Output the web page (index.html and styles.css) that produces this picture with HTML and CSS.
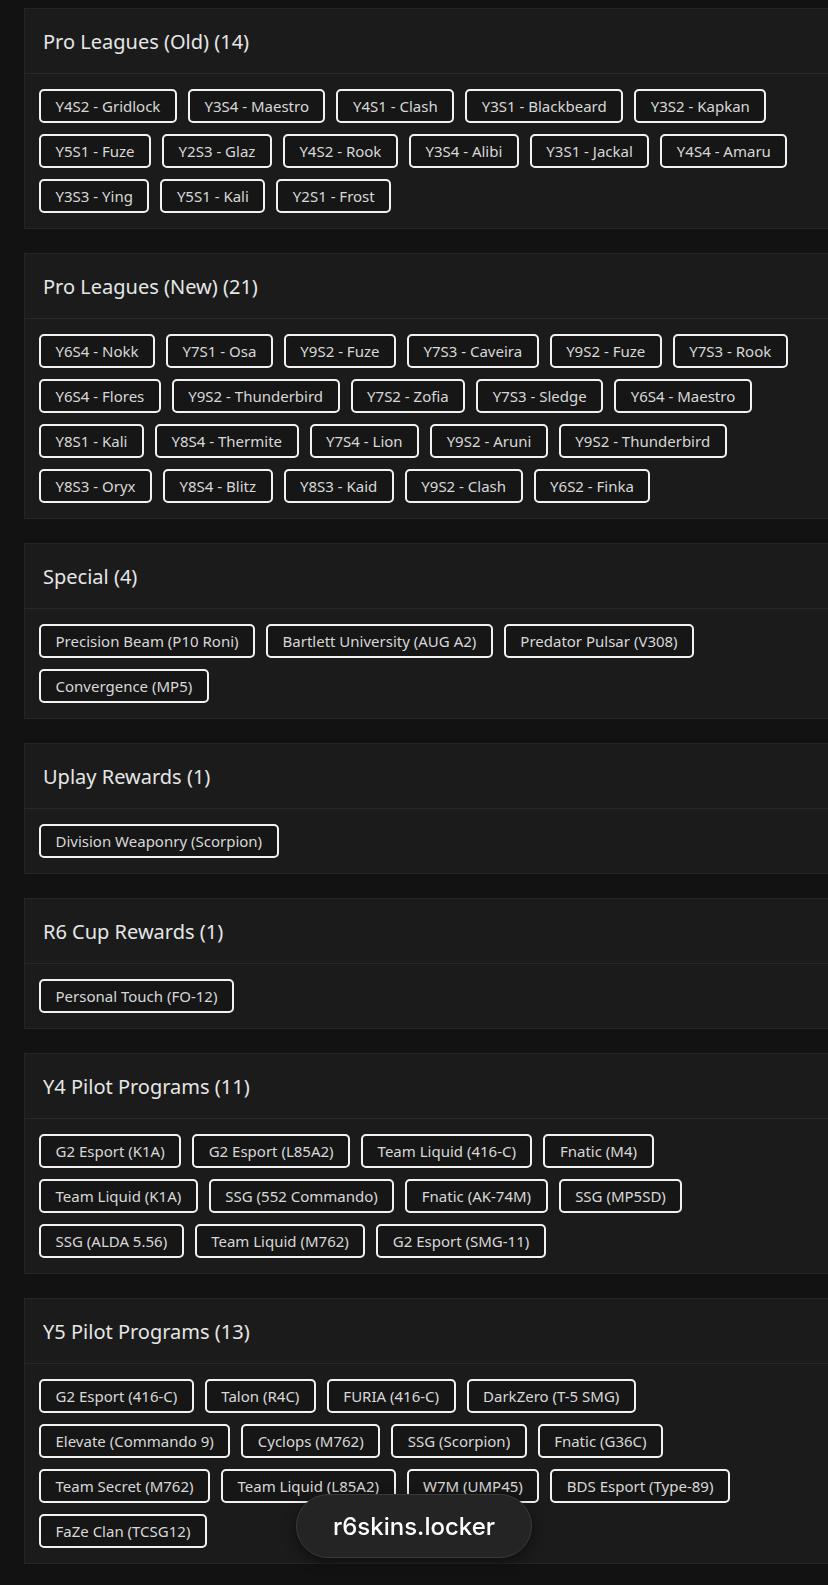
FILE: index.html
```html
<!DOCTYPE html>
<html lang="en">
<head>
<meta charset="utf-8">
<title>r6skins.locker</title>
<link rel="stylesheet" href="styles.css">
</head>
<body>
<main class="list">
  <section class="card">
    <h2 class="card-title">Pro Leagues (Old) (14)</h2>
    <div class="chips">
      <span class="chip">Y4S2 - Gridlock</span>
      <span class="chip">Y3S4 - Maestro</span>
      <span class="chip">Y4S1 - Clash</span>
      <span class="chip">Y3S1 - Blackbeard</span>
      <span class="chip">Y3S2 - Kapkan</span>
      <span class="chip">Y5S1 - Fuze</span>
      <span class="chip">Y2S3 - Glaz</span>
      <span class="chip">Y4S2 - Rook</span>
      <span class="chip">Y3S4 - Alibi</span>
      <span class="chip">Y3S1 - Jackal</span>
      <span class="chip">Y4S4 - Amaru</span>
      <span class="chip">Y3S3 - Ying</span>
      <span class="chip">Y5S1 - Kali</span>
      <span class="chip">Y2S1 - Frost</span>
    </div>
  </section>

  <section class="card">
    <h2 class="card-title">Pro Leagues (New) (21)</h2>
    <div class="chips">
      <span class="chip">Y6S4 - Nokk</span>
      <span class="chip">Y7S1 - Osa</span>
      <span class="chip">Y9S2 - Fuze</span>
      <span class="chip">Y7S3 - Caveira</span>
      <span class="chip">Y9S2 - Fuze</span>
      <span class="chip">Y7S3 - Rook</span>
      <span class="chip">Y6S4 - Flores</span>
      <span class="chip">Y9S2 - Thunderbird</span>
      <span class="chip">Y7S2 - Zofia</span>
      <span class="chip">Y7S3 - Sledge</span>
      <span class="chip">Y6S4 - Maestro</span>
      <span class="chip">Y8S1 - Kali</span>
      <span class="chip">Y8S4 - Thermite</span>
      <span class="chip">Y7S4 - Lion</span>
      <span class="chip">Y9S2 - Aruni</span>
      <span class="chip">Y9S2 - Thunderbird</span>
      <span class="chip">Y8S3 - Oryx</span>
      <span class="chip">Y8S4 - Blitz</span>
      <span class="chip">Y8S3 - Kaid</span>
      <span class="chip">Y9S2 - Clash</span>
      <span class="chip">Y6S2 - Finka</span>
    </div>
  </section>

  <section class="card">
    <h2 class="card-title">Special (4)</h2>
    <div class="chips">
      <span class="chip">Precision Beam (P10 Roni)</span>
      <span class="chip">Bartlett University (AUG A2)</span>
      <span class="chip">Predator Pulsar (V308)</span>
      <span class="chip">Convergence (MP5)</span>
    </div>
  </section>

  <section class="card">
    <h2 class="card-title">Uplay Rewards (1)</h2>
    <div class="chips">
      <span class="chip">Division Weaponry (Scorpion)</span>
    </div>
  </section>

  <section class="card">
    <h2 class="card-title">R6 Cup Rewards (1)</h2>
    <div class="chips">
      <span class="chip">Personal Touch (FO-12)</span>
    </div>
  </section>

  <section class="card">
    <h2 class="card-title">Y4 Pilot Programs (11)</h2>
    <div class="chips">
      <span class="chip">G2 Esport (K1A)</span>
      <span class="chip">G2 Esport (L85A2)</span>
      <span class="chip">Team Liquid (416-C)</span>
      <span class="chip">Fnatic (M4)</span>
      <span class="chip">Team Liquid (K1A)</span>
      <span class="chip">SSG (552 Commando)</span>
      <span class="chip">Fnatic (AK-74M)</span>
      <span class="chip">SSG (MP5SD)</span>
      <span class="chip">SSG (ALDA 5.56)</span>
      <span class="chip">Team Liquid (M762)</span>
      <span class="chip">G2 Esport (SMG-11)</span>
    </div>
  </section>

  <section class="card">
    <h2 class="card-title">Y5 Pilot Programs (13)</h2>
    <div class="chips">
      <span class="chip">G2 Esport (416-C)</span>
      <span class="chip">Talon (R4C)</span>
      <span class="chip">FURIA (416-C)</span>
      <span class="chip">DarkZero (T-5 SMG)</span>
      <span class="chip">Elevate (Commando 9)</span>
      <span class="chip">Cyclops (M762)</span>
      <span class="chip">SSG (Scorpion)</span>
      <span class="chip">Fnatic (G36C)</span>
      <span class="chip">Team Secret (M762)</span>
      <span class="chip">Team Liquid (L85A2)</span>
      <span class="chip">W7M (UMP45)</span>
      <span class="chip">BDS Esport (Type-89)</span>
      <span class="chip">FaZe Clan (TCSG12)</span>
    </div>
  </section>
</main>

<a class="site-pill" href="#">r6skins.locker</a>
</body>
</html>
```
FILE: styles.css
```css
html, body {
  margin: 0;
  padding: 0;
  background: #121212;
  overflow-x: hidden;
}

body {
  font-family: "Noto Sans", "Open Sans", sans-serif;
  color: #e4e4e4;
}

.list {
  display: flex;
  flex-direction: column;
  gap: 24px;
  padding: 8px 0 24px 24px;
}

.card {
  margin-right: -12px;
  background: #1b1b1b;
  border: 1px solid #252525;
}

.card-title {
  margin: 0;
  height: 64px;
  display: flex;
  align-items: center;
  padding: 0 18px;
  font-size: 20px;
  font-weight: 400;
  color: #e6e6e6;
  border-bottom: 1px solid #282828;
}

.chips {
  display: flex;
  flex-wrap: wrap;
  gap: 11px;
  padding: 15px 31px 15px 14px;
}

.chip {
  box-sizing: border-box;
  height: 34px;
  display: inline-flex;
  align-items: center;
  padding: 0 14.5px;
  border: 2px solid #f2f2f2;
  border-radius: 5px;
  background: #161616;
  color: #d8d8d8;
  font-size: 15px;
  white-space: nowrap;
}

.site-pill {
  position: fixed;
  left: 50%;
  bottom: 27px;
  transform: translateX(-50%);
  box-sizing: border-box;
  width: 236px;
  height: 64px;
  display: flex;
  align-items: center;
  justify-content: center;
  border-radius: 32px;
  background: #242424;
  border: 1px solid #3a3a3a;
  box-shadow: 0 4px 14px rgba(0, 0, 0, 0.45);
  color: #ffffff;
  font-family: Inter, "Noto Sans", sans-serif;
  font-size: 24px;
  font-weight: 500;
  text-decoration: none;
}
```
